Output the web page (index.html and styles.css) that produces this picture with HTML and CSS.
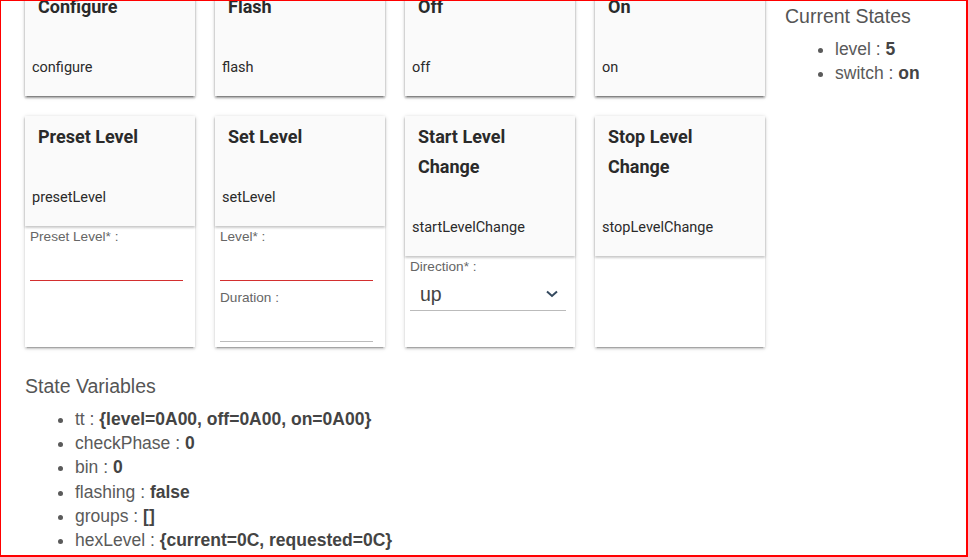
FILE: index.html
```html
<!DOCTYPE html>
<html lang="en">
<head>
    <meta charset="UTF-8">
    <meta name="viewport" content="width=device-width, initial-scale=1.0">
    <title>Device Commands</title>
    <link rel="stylesheet" href="styles.css">
</head>
<body>
    <div class="page">
        <div class="main">
            <div class="commands">
                <div class="card">
                    <div class="card-head">
                        <div class="card-title">Configure</div>
                        <div class="card-cmd">configure</div>
                    </div>
                </div>
                <div class="card">
                    <div class="card-head">
                        <div class="card-title">Flash</div>
                        <div class="card-cmd">flash</div>
                    </div>
                </div>
                <div class="card">
                    <div class="card-head">
                        <div class="card-title">Off</div>
                        <div class="card-cmd">off</div>
                    </div>
                </div>
                <div class="card">
                    <div class="card-head">
                        <div class="card-title">On</div>
                        <div class="card-cmd">on</div>
                    </div>
                </div>

                <div class="card">
                    <div class="card-head">
                        <div class="card-title">Preset Level</div>
                        <div class="card-cmd">presetLevel</div>
                    </div>
                    <div class="card-body">
                        <div class="field-label">Preset Level* :</div>
                        <div class="field-input required"></div>
                    </div>
                </div>
                <div class="card">
                    <div class="card-head">
                        <div class="card-title">Set Level</div>
                        <div class="card-cmd">setLevel</div>
                    </div>
                    <div class="card-body">
                        <div class="field-label">Level* :</div>
                        <div class="field-input required"></div>
                        <div class="field-label">Duration :</div>
                        <div class="field-input"></div>
                    </div>
                </div>
                <div class="card">
                    <div class="card-head">
                        <div class="card-title">Start Level Change</div>
                        <div class="card-cmd">startLevelChange</div>
                    </div>
                    <div class="card-body">
                        <div class="field-label">Direction* :</div>
                        <div class="field-select">
                            <span>up</span>
                            <svg width="12" height="8" viewBox="0 0 12 8">
                                <path d="M1 1.5 L6 6 L11 1.5" fill="none" stroke="#34495e" stroke-width="2"/>
                            </svg>
                        </div>
                    </div>
                </div>
                <div class="card">
                    <div class="card-head">
                        <div class="card-title">Stop Level Change</div>
                        <div class="card-cmd">stopLevelChange</div>
                    </div>
                    <div class="card-body"></div>
                </div>
            </div>

            <h5 class="section-title vars-title">State Variables</h5>
            <ul class="attr-list">
                <li>tt : <b>{level=0A00, off=0A00, on=0A00}</b></li>
                <li>checkPhase : <b>0</b></li>
                <li>bin : <b>0</b></li>
                <li>flashing : <b>false</b></li>
                <li>groups : <b>[]</b></li>
                <li>hexLevel : <b>{current=0C, requested=0C}</b></li>
            </ul>
        </div>

        <aside class="states">
            <h5 class="section-title">Current States</h5>
            <ul class="attr-list">
                <li>level : <b>5</b></li>
                <li>switch : <b>on</b></li>
            </ul>
        </aside>
    </div>
    <div class="frame"></div>
</body>
</html>
```

FILE: styles.css
```css
body {
    margin: 0;
    font-family: "Liberation Sans", Arial, sans-serif;
    color: #555;
    background: #ffffff;
    overflow: hidden;
}
.page {
    display: flex;
    gap: 20px;
    margin-top: -14px;
    padding-left: 25px;
}
.commands {
    display: grid;
    grid-template-columns: repeat(4, 170px);
    gap: 20px;
}
.card {
    display: flex;
    flex-direction: column;
    background: #ffffff;
    box-shadow: 0 2px 2px 0 rgba(0, 0, 0, 0.14), 0 3px 1px -2px rgba(0, 0, 0, 0.2), 0 1px 5px 0 rgba(0, 0, 0, 0.12);
}
.card-head {
    background: #fafafa;
    padding: 6px 0 18px;
    font-family: Roboto, "Liberation Sans", sans-serif;
    color: #2a2a2a;
    box-shadow: 0 2px 2px 0 rgba(0, 0, 0, 0.14), 0 1px 3px 0 rgba(0, 0, 0, 0.12);
    position: relative;
}
.card-title {
    font-size: 18px;
    font-weight: 700;
    line-height: 30px;
    padding: 0 13px;
}
.card-cmd {
    font-size: 14.5px;
    line-height: 20px;
    margin-top: 36px;
    padding: 0 7px;
}
.card-body {
    flex: 1;
    padding: 3px 5px 5px;
}
.field-label {
    font-size: 13.6px;
    line-height: 16px;
    color: #666;
}
.field-input {
    width: 153px;
    height: 35px;
    border-bottom: 1px solid #bbb;
    margin-bottom: 9px;
}
.field-input:last-child {
    margin-bottom: 0;
}
.field-input.required {
    border-bottom-color: #d32f2f;
}
.field-select {
    display: flex;
    align-items: center;
    justify-content: space-between;
    width: 156px;
    height: 36px;
    box-sizing: border-box;
    padding: 3px 8px 0 10px;
    border-bottom: 1px solid #bbb;
    font-size: 19.5px;
    color: #444;
}
.section-title {
    margin: 0;
    font-size: 19.5px;
    font-weight: 400;
    line-height: 24px;
    color: #555;
}
.vars-title {
    margin-top: 27px;
}
.states {
    padding-top: 18px;
}
.attr-list {
    margin: 9px 0 0;
    padding-left: 50px;
    font-size: 17.5px;
    line-height: 24.2px;
    color: #5a5a5a;
}
.attr-list b {
    color: #444;
}
.frame {
    position: fixed;
    inset: 0;
    border-top: 1px solid #ff0000;
    border-left: 1px solid #ff0000;
    border-right: 2px solid #ff0000;
    border-bottom: 2px solid #ff0000;
    pointer-events: none;
}
```
